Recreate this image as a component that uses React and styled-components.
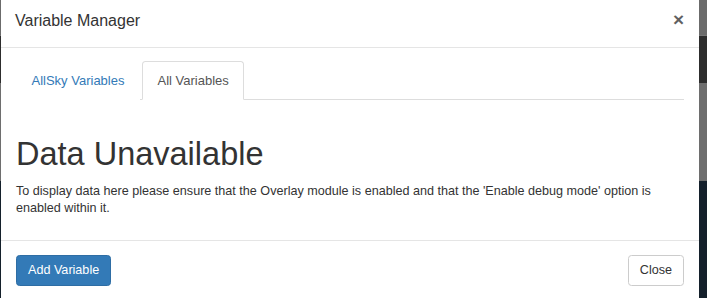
import React from "react";
import styled, { createGlobalStyle } from "styled-components";

const GlobalStyle = createGlobalStyle`
  html, body {
    margin: 0;
    padding: 0;
    height: 298px;
    overflow: hidden;
  }
  body {
    font-family: "Liberation Sans", Arial, Helvetica, sans-serif;
    color: #333;
    background: linear-gradient(
      to bottom,
      #6b6b6b 0px, #6b6b6b 35px,
      #777 35px, #777 36px,
      #2d2d2d 36px, #2d2d2d 83px,
      #6e6e6e 83px, #6e6e6e 181px,
      #14202b 181px, #14202b 298px
    );
  }
  * { box-sizing: border-box; }
`;

const Modal = styled.div`
  margin-left: 1px;
  width: 698px;
  height: 298px;
  background: #fff;
  overflow: hidden;
  display: flex;
  flex-direction: column;
`;

const Header = styled.div`
  height: 48px;
  flex-shrink: 0;
  padding: 10px 15px 0 14px;
  border-bottom: 1px solid #e5e5e5;
  display: flex;
  align-items: flex-start;
`;

const Title = styled.h4`
  margin: 0;
  font-size: 16px;
  line-height: 22px;
  font-weight: normal;
  color: #333;
`;

const CloseX = styled.button`
  margin-left: auto;
  margin-top: -1px;
  padding: 0;
  border: 0;
  background: transparent;
  font-family: "Liberation Sans", Arial, sans-serif;
  font-size: 19px;
  font-weight: bold;
  line-height: 22px;
  color: #000;
  opacity: 0.62;
  cursor: pointer;
`;

const Body = styled.div`
  padding: 13px 15px 22px;
`;

const Tabs = styled.ul`
  list-style: none;
  margin: 0;
  padding: 0;
  display: flex;
  border-bottom: 1px solid #ddd;
`;

const Tab = styled.li`
  margin-right: 2px;
  margin-bottom: -1px;
  padding: 10px 14.5px 9px;
  font-size: 13px;
  line-height: 18px;
  border: 1px solid ${(p) => (p.$active ? "#ddd" : "transparent")};
  border-bottom-color: ${(p) => (p.$active ? "#fff" : "transparent")};
  border-radius: 3.5px 3.5px 0 0;
  background: #fff;
  color: ${(p) => (p.$active ? "#555" : "#337ab7")};
  cursor: default;
`;

const Heading = styled.h1`
  margin: 37px 0 10px;
  font-size: 32.5px;
  line-height: 1.1;
  font-weight: 500;
  color: #333;
`;

const Text = styled.p`
  margin: 0;
  font-size: 12.6px;
  line-height: 17.5px;
  color: #333;
`;

const Footer = styled.div`
  border-top: 1px solid #e5e5e5;
  padding: 14px 15px;
  display: flex;
  justify-content: space-between;
`;

const Button = styled.button`
  font-family: "Liberation Sans", Arial, sans-serif;
  font-size: 12.6px;
  line-height: 18px;
  padding: 5.5px 11px;
  border-radius: 3.5px;
  border: 1px solid ${(p) => (p.$primary ? "#2e6da4" : "#ccc")};
  background: ${(p) => (p.$primary ? "#337ab7" : "#fff")};
  color: ${(p) => (p.$primary ? "#fff" : "#333")};
  cursor: pointer;
`;

export default function App() {
  return (
    <>
      <GlobalStyle />
      <Modal>
        <Header>
          <Title>Variable Manager</Title>
          <CloseX aria-label="Close">×</CloseX>
        </Header>
        <Body>
          <Tabs>
            <Tab>AllSky Variables</Tab>
            <Tab $active>All Variables</Tab>
          </Tabs>
          <Heading>Data Unavailable</Heading>
          <Text>
            To display data here please ensure that the Overlay module is enabled and that the
            'Enable debug mode' option is enabled within it.
          </Text>
        </Body>
        <Footer>
          <Button $primary>Add Variable</Button>
          <Button>Close</Button>
        </Footer>
      </Modal>
    </>
  );
}
